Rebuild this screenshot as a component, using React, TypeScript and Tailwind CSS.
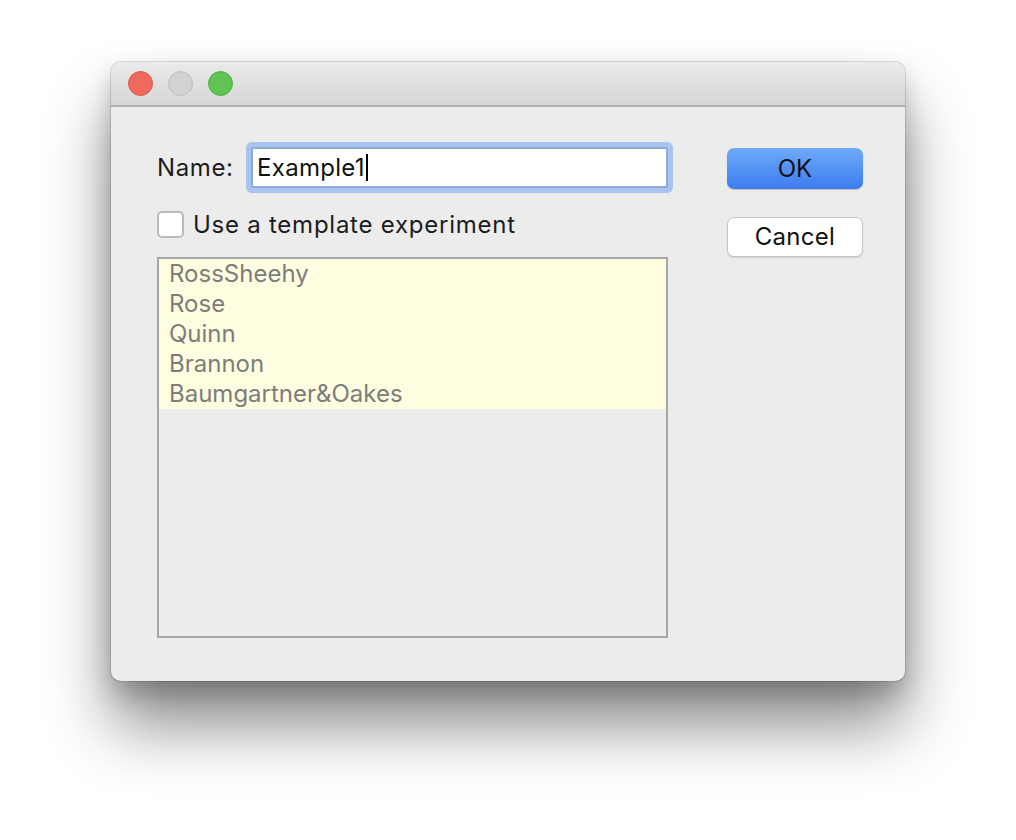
import React from "react";

const templates = ["RossSheehy", "Rose", "Quinn", "Brannon", "Baumgartner&Oakes"];

const font = { fontFamily: "Inter, 'Liberation Sans', Arial, sans-serif" };

function TrafficLights() {
  return (
    <div className="flex items-center gap-[15px] pl-[17px]">
      <span className="h-[25px] w-[25px] rounded-full bg-[#ee6a5e] border border-[#d9574c]" />
      <span className="h-[25px] w-[25px] rounded-full bg-[#d2d2d2] border border-[#bdbdbd]" />
      <span className="h-[25px] w-[25px] rounded-full bg-[#5fc454] border border-[#4daf42]" />
    </div>
  );
}

export default function App() {
  return (
    <div className="min-h-[840px] w-full bg-white pt-[62px] pl-[111px]" style={font}>
      <div className="flex h-[619px] w-[794px] flex-col overflow-hidden rounded-[10px] bg-[#ececec] shadow-[0_0_0_1px_rgba(0,0,0,0.12),0_45px_65px_rgba(0,0,0,0.45),0_12px_24px_rgba(0,0,0,0.2)]">
        {/* title bar */}
        <div className="flex h-[45px] items-center border-b-2 border-[#b1b1b1] bg-gradient-to-b from-[#ebebeb] to-[#d6d6d6]">
          <TrafficLights />
        </div>

        {/* body */}
        <div className="flex pt-[40px] pl-[46px]">
          <div className="flex w-[511px] flex-col">
            <div className="flex h-[41px] items-center">
              <span className="text-[24px] tracking-[0.6px] text-[#1c1c1c]">Name:</span>
              <div className="ml-auto flex h-[41px] w-[417px] items-center rounded-[2px] border-2 border-[#8eaad9] bg-white pl-[4px] shadow-[0_0_0_5px_#a7c3ee]">
                <span className="text-[24px] tracking-[0.3px] text-[#111]">Example1</span>
                <span className="ml-[1px] h-[27px] w-[2px] bg-black" />
              </div>
            </div>

            <div className="mt-[23px] flex h-[27px] items-center gap-[9px]">
              <span className="h-[27px] w-[27px] rounded-[5px] border-2 border-[#bababa] bg-white" />
              <span className="text-[24px] tracking-[0.75px] text-[#1c1c1c]">Use a template experiment</span>
            </div>

            <div className="mt-[19px] h-[381px] border-2 border-[#a6a6a6] bg-[#ececec]">
              {templates.map((t) => (
                <div key={t} className="flex h-[30px] items-center bg-[#fffee0] pl-[10px] text-[24px] text-[#7d7d7d]">
                  {t}
                </div>
              ))}
            </div>
          </div>

          <div className="ml-[59px] flex flex-col">
            <button className="mt-[1px] flex h-[41px] w-[136px] items-center justify-center rounded-[7px] bg-gradient-to-b from-[#6eaaf8] to-[#3c7bef] text-[24px] text-[#111] shadow-[0_1px_1px_rgba(0,0,0,0.2)]">
              OK
            </button>
            <button className="mt-[28px] flex h-[40px] w-[136px] items-center justify-center rounded-[7px] border border-[#c6c6c6] bg-white text-[24px] tracking-[0.3px] text-[#111] shadow-[0_1px_1px_rgba(0,0,0,0.12)]">
              Cancel
            </button>
          </div>
        </div>
      </div>
    </div>
  );
}
